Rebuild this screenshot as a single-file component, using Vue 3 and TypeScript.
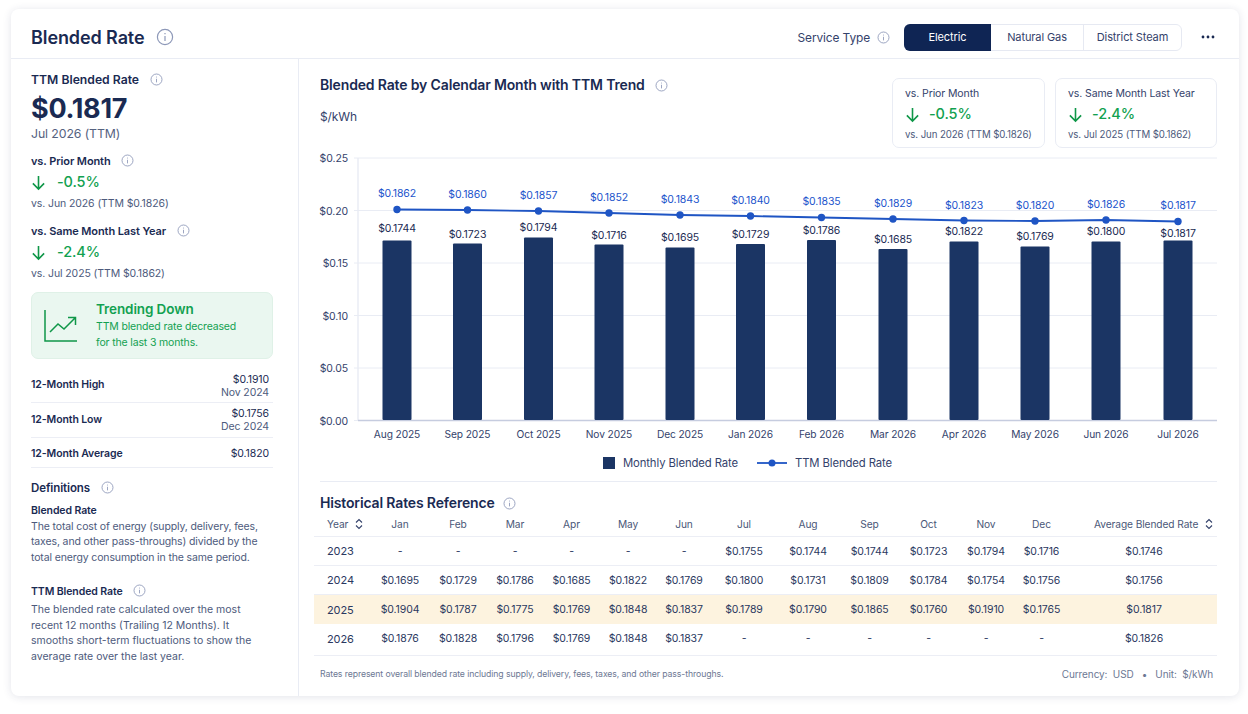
<script setup lang="ts">
const months = ['Aug 2025','Sep 2025','Oct 2025','Nov 2025','Dec 2025','Jan 2026','Feb 2026','Mar 2026','Apr 2026','May 2026','Jun 2026','Jul 2026']
const cx = [397,467.5,538.5,609,680,750.5,821.5,893,964,1035,1106,1178]
const barTop = [240.5,243.5,237.5,244.5,247.5,244,240,249,241.5,246.5,241.5,240.5]
const lineY = [209.5,210,211,213,215,216,217.5,219,220.5,221,220,221.5]
const ttmLabelY = [193,194,195,197,199,200,201.5,203,205,205,204,205.5]
const barLabelY = [228,234,227,235,237,234,230,239,231.5,236.5,231.5,233]
const ttm = ['$0.1862','$0.1860','$0.1857','$0.1852','$0.1843','$0.1840','$0.1835','$0.1829','$0.1823','$0.1820','$0.1826','$0.1817']
const monthly = ['$0.1744','$0.1723','$0.1794','$0.1716','$0.1695','$0.1729','$0.1786','$0.1685','$0.1822','$0.1769','$0.1800','$0.1817']
const points = cx.map((x, i) => `${x},${lineY[i]}`).join(' ')
const axis = [
  { label: '$0.25', y: 158 }, { label: '$0.20', y: 210.5 }, { label: '$0.15', y: 263 },
  { label: '$0.10', y: 315.5 }, { label: '$0.05', y: 368 }, { label: '$0.00', y: 420.5 },
]
const bars = months.map((m, i) => ({ m, x: cx[i], top: barTop[i], ly: lineY[i], tl: ttm[i], tly: ttmLabelY[i], bl: monthly[i], bly: barLabelY[i] }))
const heads = ['Jan','Feb','Mar','Apr','May','Jun','Jul','Aug','Sep','Oct','Nov','Dec']
const widths = [57,58,58,56,57,56,56,64,64,59,59,56,55,148]
const rows = [
  { year: '2023', hl: false, vals: ['-','-','-','-','-','-','$0.1755','$0.1744','$0.1744','$0.1723','$0.1794','$0.1716'], avg: '$0.1746' },
  { year: '2024', hl: false, vals: ['$0.1695','$0.1729','$0.1786','$0.1685','$0.1822','$0.1769','$0.1800','$0.1731','$0.1809','$0.1784','$0.1754','$0.1756'], avg: '$0.1756' },
  { year: '2025', hl: true, vals: ['$0.1904','$0.1787','$0.1775','$0.1769','$0.1848','$0.1837','$0.1789','$0.1790','$0.1865','$0.1760','$0.1910','$0.1765'], avg: '$0.1817' },
  { year: '2026', hl: false, vals: ['$0.1876','$0.1828','$0.1796','$0.1769','$0.1848','$0.1837','-','-','-','-','-','-'], avg: '$0.1826' },
]
const gridCols = widths.map((w) => `${w}px`).join(' ')
const stats = [
  { title: 'vs. Prior Month', value: '-0.5%', sub: 'vs. Jun 2026 (TTM $0.1826)' },
  { title: 'vs. Same Month Last Year', value: '-2.4%', sub: 'vs. Jul 2025 (TTM $0.1862)' },
]
</script>

<template>
  <div class="page">
    <div class="card">
      <header class="top">
        <h1>Blended Rate</h1>
        <svg class="info i18" viewBox="0 0 18 18"><circle cx="9" cy="9" r="7.6" /><path d="M9 8v5M9 5v1.2" /></svg>
        <div class="spacer"></div>
        <span class="svc">Service Type</span>
        <svg class="info i13 svc-i" viewBox="0 0 18 18"><circle cx="9" cy="9" r="7.6" /><path d="M9 8v5M9 5v1.2" /></svg>
        <div class="seg">
          <span class="s1 on">Electric</span>
          <span class="s2">Natural Gas</span>
          <span class="s3">District Steam</span>
        </div>
        <svg class="dots" viewBox="0 0 14 4"><circle cx="2" cy="2" r="1.4" /><circle cx="7" cy="2" r="1.4" /><circle cx="12" cy="2" r="1.4" /></svg>
      </header>

      <div class="body">
        <aside class="side">
          <div class="lab t1">TTM Blended Rate
            <svg class="info i13" viewBox="0 0 18 18"><circle cx="9" cy="9" r="7.6" /><path d="M9 8v5M9 5v1.2" /></svg>
          </div>
          <div class="big">$0.1817</div>
          <div class="period">Jul 2026 (TTM)</div>

          <div class="lab t2">vs. Prior Month
            <svg class="info i13" viewBox="0 0 18 18"><circle cx="9" cy="9" r="7.6" /><path d="M9 8v5M9 5v1.2" /></svg>
          </div>
          <div class="delta">
            <svg class="arrow" viewBox="0 0 16 18"><path d="M8 2v14M2 10l6 6 6-6" /></svg>-0.5%
          </div>
          <div class="sub">vs. Jun 2026 (TTM $0.1826)</div>

          <div class="lab t3">vs. Same Month Last Year
            <svg class="info i13" viewBox="0 0 18 18"><circle cx="9" cy="9" r="7.6" /><path d="M9 8v5M9 5v1.2" /></svg>
          </div>
          <div class="delta">
            <svg class="arrow" viewBox="0 0 16 18"><path d="M8 2v14M2 10l6 6 6-6" /></svg>-2.4%
          </div>
          <div class="sub">vs. Jul 2025 (TTM $0.1862)</div>

          <div class="trend">
            <svg class="trend-i" viewBox="0 0 36 36"><path d="M2 2v31h32" /><path d="M7 24l8-8 6 5 11-11M25 9.500h7.500V17" /></svg>
            <div>
              <div class="trend-t">Trending Down</div>
              <div class="trend-d">TTM blended rate decreased<br />for the last 3 months.</div>
            </div>
          </div>

          <div class="kv h43"><b>12-Month High</b><div class="kv-r"><span>$0.1910</span><small>Nov 2024</small></div></div>
          <div class="kv h34"><b>12-Month Low</b><div class="kv-r"><span>$0.1756</span><small>Dec 2024</small></div></div>
          <div class="kv h30"><b>12-Month Average</b><div class="kv-r"><span>$0.1820</span></div></div>

          <div class="def-h">Definitions
            <svg class="info i13" viewBox="0 0 18 18"><circle cx="9" cy="9" r="7.6" /><path d="M9 8v5M9 5v1.2" /></svg>
          </div>
          <div class="def-t">Blended Rate</div>
          <p class="def-p">The total cost of energy (supply, delivery, fees, taxes, and other pass-throughs) divided by the total energy consumption in the same period.</p>
          <div class="def-t second">TTM Blended Rate
            <svg class="info i13" viewBox="0 0 18 18"><circle cx="9" cy="9" r="7.6" /><path d="M9 8v5M9 5v1.2" /></svg>
          </div>
          <p class="def-p p2">The blended rate calculated over the most<br />recent 12 months (Trailing 12 Months). It<br />smooths short-term fluctuations to show the<br />average rate over the last year.</p>
        </aside>

        <main class="main">
          <div class="chart-head">
            <div class="titles">
              <h2>Blended Rate by Calendar Month with TTM Trend
                <svg class="info i13" viewBox="0 0 18 18"><circle cx="9" cy="9" r="7.6" /><path d="M9 8v5M9 5v1.2" /></svg>
              </h2>
              <div class="unit">$/kWh</div>
            </div>
            <div v-for="(s, i) in stats" :key="s.title" class="stat" :class="i === 0 ? 'w1' : 'w2'">
              <div class="stat-t">{{ s.title }}</div>
              <div class="delta small">
                <svg class="arrow" viewBox="0 0 16 18"><path d="M8 2v14M2 10l6 6 6-6" /></svg>{{ s.value }}
              </div>
              <div class="stat-s">{{ s.sub }}</div>
            </div>
          </div>

          <svg class="chart" viewBox="300 150 918 295" width="918" height="295">
            <line x1="358" y1="158" x2="358" y2="420.500" stroke="#dfe3ef" />
            <g v-for="a in axis" :key="a.label">
              <line x1="354" :y1="a.y" x2="1217" :y2="a.y" stroke="#e9ecf4" />
              <text x="348" :y="a.y + 4" text-anchor="end" class="ax">{{ a.label }}</text>
            </g>
            <line x1="358" y1="420.500" x2="1217" y2="420.500" stroke="#c6ccdf" stroke-width="1.500" />
            <rect v-for="b in bars" :key="'r' + b.m" :x="b.x - 14.500" :y="b.top" width="29" :height="420 - b.top" rx="1" fill="#1b3564" />
            <polyline :points="points" fill="none" stroke="#1f55c4" stroke-width="1.800" />
            <g v-for="b in bars" :key="b.m">
              <circle :cx="b.x" :cy="b.ly" r="3.700" fill="#1f55c4" />
              <text :x="b.x" :y="b.tly + 3.500" text-anchor="middle" class="tl">{{ b.tl }}</text>
              <text :x="b.x" :y="b.bly + 3.500" text-anchor="middle" class="bl">{{ b.bl }}</text>
              <text :x="b.x" y="438" text-anchor="middle" class="mo">{{ b.m }}</text>
            </g>
          </svg>

          <div class="legend">
            <span class="swatch"></span><span class="lg1">Monthly Blended Rate</span>
            <svg class="lg-line" viewBox="0 0 30 10"><path d="M0 5h30" /><circle cx="15" cy="5" r="3.500" /></svg><span>TTM Blended Rate</span>
          </div>

          <div class="hist-h">
            <h2>Historical Rates Reference
              <svg class="info i13" viewBox="0 0 18 18"><circle cx="9" cy="9" r="7.6" /><path d="M9 8v5M9 5v1.2" /></svg>
            </h2>
          </div>

          <div class="table">
            <div class="row head" :style="{ gridTemplateColumns: gridCols }">
              <div class="c-year">Year
                <svg class="sort" viewBox="0 0 8 12"><path d="M1 4.500l3-3 3 3M1 7.500l3 3 3-3" /></svg>
              </div>
              <div v-for="h in heads" :key="h" class="c">{{ h }}</div>
              <div class="c-avgh">Average Blended Rate
                <svg class="sort" viewBox="0 0 8 12"><path d="M1 4.500l3-3 3 3M1 7.500l3 3 3-3" /></svg>
              </div>
            </div>
            <div v-for="r in rows" :key="r.year" class="row" :class="{ hl: r.hl }" :style="{ gridTemplateColumns: gridCols }">
              <div class="c-year y">{{ r.year }}</div>
              <div v-for="(v, i) in r.vals" :key="i" class="c" :class="{ dash: v === '-' }">{{ v }}</div>
              <div class="c avg">{{ r.avg }}</div>
            </div>
          </div>

          <footer class="foot">
            <span>Rates represent overall blended rate including supply, delivery, fees, taxes, and other pass-throughs.</span>
            <span class="foot-r">Currency:&nbsp;&nbsp;USD&nbsp;&nbsp;&nbsp;•&nbsp;&nbsp;&nbsp;Unit:&nbsp;&nbsp;$/kWh</span>
          </footer>
        </main>
      </div>
    </div>
  </div>
</template>

<style>
html, body { margin: 0; background: #ffffff; }
</style>

<style scoped>
.page {
  width: 1248px; height: 714px; box-sizing: border-box; padding: 9px 9px 18px 11px;
  font-family: Inter, "Noto Sans", sans-serif; color: #1a2a52; overflow: hidden;
  letter-spacing: -0.1px;
}
.card {
  height: 687px; background: #fff; border-radius: 8px; overflow: hidden;
  box-shadow: 0 1px 8px rgba(40, 50, 90, 0.13); display: flex; flex-direction: column;
}
.top {
  height: 50px; flex: none; display: flex; align-items: center; padding: 7px 24px 0 20px;
  border-bottom: 1px solid #e9ecf4; box-sizing: border-box;
}
h1 { margin: 0 11px 0 0; font-size: 18px; font-weight: 600; color: #1a2a52; }
.spacer { flex: 1; }
.info { fill: none; stroke: #8d98b8; stroke-width: 1.200; flex: none; }
.i18 { width: 18px; height: 18px; }
.i13 { width: 13px; height: 13px; margin-left: 7px; vertical-align: -2px; }
.svc { font-size: 11.900px; color: #34426b; }
.svc-i { margin-right: 14px; }
.seg { display: flex; height: 27px; border: 1px solid #e6e9f2; border-radius: 6px; box-sizing: border-box; font-size: 11px; color: #34426b; }
.seg span { display: flex; align-items: center; justify-content: center; box-sizing: border-box; }
.seg .s1 { width: 87px; margin: -1px 0 -1px -1px; background: #0f2554; color: #fff; border-radius: 6px 0 0 6px; height: 27px; }
.seg .s2 { width: 93px; border-right: 1px solid #e6e9f2; }
.seg .s3 { width: 97px; }
.dots { width: 14px; height: 4px; fill: #1a2a52; margin-left: 19px; }

.body { flex: 1; display: flex; min-height: 0; }
.side { width: 288px; flex: none; box-sizing: border-box; padding: 14px 25px 0 20px; border-right: 1px solid #e9ecf4; }
.lab { font-size: 11px; font-weight: 600; line-height: 14px; color: #1a2a52; }
.lab .info { margin-left: 8px; }
.t1 { font-size: 12.200px; letter-spacing: 0; }
.t1 .info { margin-left: 8px; }
.big { font-size: 27px; font-weight: 700; line-height: 34px; margin-top: 5px; letter-spacing: -0.3px; }
.period { font-size: 12.300px; color: #56627f; line-height: 16px; }
.t2 { margin-top: 12px; }
.t3 { margin-top: 13px; }
.delta { display: flex; align-items: center; font-size: 14.500px; font-weight: 500; color: #12a150; line-height: 20px; margin-top: 4px; }
.arrow { width: 15px; height: 17px; fill: none; stroke: #0f9748; stroke-width: 1.700; margin-right: 11px; flex: none; }
.sub { font-size: 10.500px; color: #4d5a7c; line-height: 14px; margin-top: 5px; }
.trend {
  margin-top: 11px; height: 67px; box-sizing: border-box; background: #eaf7f0; border: 1px solid #dff1e7; border-radius: 7px;
  display: flex; align-items: center; padding: 0 0 0 11px; color: #12a150;
}
.trend-i { width: 36px; height: 36px; fill: none; stroke: #0f9748; stroke-width: 1.500; margin-right: 17px; flex: none; }
.trend-t { font-size: 13.500px; font-weight: 600; line-height: 18px; }
.trend-d { font-size: 10.500px; line-height: 16px; margin-top: 1px; letter-spacing: -0.15px; }
.kv { display: flex; justify-content: space-between; align-items: center; border-bottom: 1px solid #eceef5; padding-right: 4px; box-sizing: border-box; }
.kv b { font-size: 10.500px; font-weight: 600; }
.kv-r { display: flex; flex-direction: column; align-items: flex-end; font-size: 10.500px; line-height: 13.500px; }
.kv-r small { font-size: 10.500px; color: #4d5a7c; }
.h43 { height: 44px; padding-top: 7px; }
.h43 .kv-r { padding-top: 4px; }
.h34 { height: 34.500px; }
.h34 .kv-r { padding-top: 1px; }
.h30 { height: 30px; padding-top: 3px; }
.def-h { font-size: 11.500px; font-weight: 600; margin-top: 13px; line-height: 14px; }
.def-h .info { margin-left: 8px; }
.def-t { font-size: 10.500px; font-weight: 600; line-height: 14px; margin-top: 9px; }
.def-t.second { margin-top: 19px; }
.def-t .info { margin-left: 8px; }
.def-p { margin: 1px 0 0; font-size: 10.500px; line-height: 15.500px; color: #4d5a7c; letter-spacing: -0.13px; }
.def-p.p2 { margin-top: 3px; white-space: nowrap; letter-spacing: 0; }

.main { flex: 1; min-width: 0; display: flex; flex-direction: column; padding: 19px 22px 0 21px; }
.chart-head { display: flex; height: 70px; gap: 10px; flex: none; }
.titles { flex: 1; margin-top: -1px; }
h2 { margin: 0; font-size: 14px; font-weight: 600; line-height: 16px; color: #1a2a52; letter-spacing: -0.15px; }
h2 .info { margin-left: 7px; }
.hist-h h2 .info { margin-left: 5px; }
.unit { font-size: 12px; color: #34426b; margin-top: 16px; line-height: 16px; }
.stat { border: 1px solid #e9ecf4; border-radius: 7px; box-sizing: border-box; padding: 9px 0 0 12px; }
.w1 { width: 153px; }
.w2 { width: 162px; }
.stat-t { font-size: 10.500px; color: #34426b; line-height: 12px; white-space: nowrap; }
.delta.small { margin-top: 4px; }
.delta.small .arrow { margin-right: 9px; }
.stat-s { font-size: 9.700px; color: #4d5a7c; line-height: 12px; margin-top: 5px; white-space: nowrap; }

.chart { display: block; margin: 2px -22px 0 -20px; flex: none; width: 918px; }
.ax { font-size: 10.500px; fill: #34426b; }
.tl { font-size: 10.500px; fill: #1c54cc; letter-spacing: -0.1px; }
.bl { font-size: 10.500px; fill: #1a2a52; letter-spacing: -0.1px; }
.mo { font-size: 10.200px; fill: #34426b; letter-spacing: -0.1px; }

.legend { height: 22px; margin-top: 7px; display: flex; align-items: center; justify-content: center; padding-right: 42px; font-size: 11.300px; color: #34426b; flex: none; }
.swatch { width: 12px; height: 12px; background: #1b3564; margin-right: 8px; }
.lg1 { margin-right: 19px; }
.lg-line { width: 30px; height: 10px; margin-right: 8px; }
.lg-line path { stroke: #1f55c4; stroke-width: 1.800; fill: none; }
.lg-line circle { fill: #1f55c4; }

.hist-h { flex: none; border-top: 1px solid #e9ecf4; margin-top: 7px; padding-top: 13px; }
.table { margin: -1px 0 0 -6px; flex: none; }
.row { display: grid; height: 29px; align-items: center; font-size: 10.500px; color: #2a3860; border-bottom: 1px solid #eceef5; box-sizing: border-box; }
.row.head { height: 28px; margin-top: -1px; padding-top: 2px; color: #4a5778; font-size: 10.200px; }
.row:nth-child(4) { border-bottom: none; }
.row:nth-child(5) { height: 32px; padding-bottom: 2px; }
.row.hl { background: #fdf3df; }
.c { text-align: center; white-space: nowrap; }
.c.avg { padding-left: 2px; }
.c-year { padding-left: 13px; white-space: nowrap; }
.y { font-size: 11px; }
.c-avgh { text-align: right; padding-right: 4px; white-space: nowrap; }
.sort { width: 8px; height: 12px; fill: none; stroke: #34426b; stroke-width: 1.100; margin-left: 4px; vertical-align: -2px; }
.foot { display: flex; justify-content: space-between; align-items: center; height: 36px; font-size: 8.700px; color: #6d7893; padding-right: 4px; }
.foot-r { font-size: 10px; }
</style>
